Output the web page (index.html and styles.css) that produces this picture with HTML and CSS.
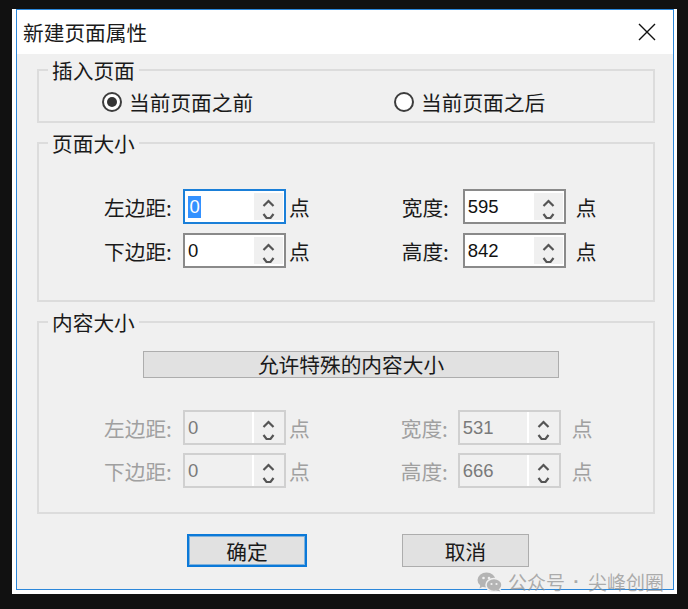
FILE: index.html
```html
<!DOCTYPE html>
<html lang="zh-CN">
<head>
<meta charset="utf-8">
<title>新建页面属性</title>
<link rel="stylesheet" href="styles.css">
</head>
<body>
<div class="screen">
  <div class="frame">
    <div class="dialog">
      <div class="titlebar">
        <span class="title">新建页面属性</span>
        <svg class="close" viewBox="0 0 18 18" width="18" height="18"><path d="M1 1 L17 17 M17 1 L1 17" stroke="#111" stroke-width="1.4" fill="none"/></svg>
      </div>
      <div class="body">
        <fieldset class="group g-insert">
          <legend>插入页面</legend>
          <div class="radios">
            <label class="radio"><span class="dot checked"></span>当前页面之前</label>
            <label class="radio"><span class="dot"></span>当前页面之后</label>
          </div>
        </fieldset>

        <fieldset class="group g-size">
          <legend>页面大小</legend>
          <div class="rows">
            <div class="row">
              <div class="field f-left">
                <span class="lbl">左边距:</span>
                <div class="spin focus"><span class="val"><span class="sel">0</span></span><span class="arrows"><svg viewBox="0 0 29 27" width="29" height="27"><path d="M9.5 13 L14.5 8 L19.5 13 M9.5 21 L12.5 25 L16.5 25 L19.5 21" stroke="#555" stroke-width="2.2" fill="none"/></svg></span></div>
                <span class="unit">点</span>
              </div>
              <div class="field f-right">
                <span class="lbl">宽度:</span>
                <div class="spin"><span class="val">595</span><span class="arrows"><svg viewBox="0 0 29 27" width="29" height="27"><path d="M9.5 13 L14.5 8 L19.5 13 M9.5 21 L12.5 25 L16.5 25 L19.5 21" stroke="#555" stroke-width="2.2" fill="none"/></svg></span></div>
                <span class="unit">点</span>
              </div>
            </div>
            <div class="row">
              <div class="field f-left">
                <span class="lbl">下边距:</span>
                <div class="spin"><span class="val">0</span><span class="arrows"><svg viewBox="0 0 29 27" width="29" height="27"><path d="M9.5 13 L14.5 8 L19.5 13 M9.5 21 L12.5 25 L16.5 25 L19.5 21" stroke="#555" stroke-width="2.2" fill="none"/></svg></span></div>
                <span class="unit">点</span>
              </div>
              <div class="field f-right">
                <span class="lbl">高度:</span>
                <div class="spin"><span class="val">842</span><span class="arrows"><svg viewBox="0 0 29 27" width="29" height="27"><path d="M9.5 13 L14.5 8 L19.5 13 M9.5 21 L12.5 25 L16.5 25 L19.5 21" stroke="#555" stroke-width="2.2" fill="none"/></svg></span></div>
                <span class="unit">点</span>
              </div>
            </div>
          </div>
        </fieldset>

        <fieldset class="group g-content">
          <legend>内容大小</legend>
          <button class="wide-btn" type="button">允许特殊的内容大小</button>
          <div class="rows">
            <div class="row">
              <div class="field f-left disabled">
                <span class="lbl">左边距:</span>
                <div class="spin"><span class="val">0</span><span class="arrows"><svg viewBox="0 0 29 27" width="29" height="27"><path d="M9.5 13 L14.5 8 L19.5 13 M9.5 21 L12.5 25 L16.5 25 L19.5 21" stroke="#555" stroke-width="2.2" fill="none"/></svg></span></div>
                <span class="unit">点</span>
              </div>
              <div class="field f-right disabled">
                <span class="lbl">宽度:</span>
                <div class="spin"><span class="val">531</span><span class="arrows"><svg viewBox="0 0 29 27" width="29" height="27"><path d="M9.5 13 L14.5 8 L19.5 13 M9.5 21 L12.5 25 L16.5 25 L19.5 21" stroke="#555" stroke-width="2.2" fill="none"/></svg></span></div>
                <span class="unit">点</span>
              </div>
            </div>
            <div class="row">
              <div class="field f-left disabled">
                <span class="lbl">下边距:</span>
                <div class="spin"><span class="val">0</span><span class="arrows"><svg viewBox="0 0 29 27" width="29" height="27"><path d="M9.5 13 L14.5 8 L19.5 13 M9.5 21 L12.5 25 L16.5 25 L19.5 21" stroke="#555" stroke-width="2.2" fill="none"/></svg></span></div>
                <span class="unit">点</span>
              </div>
              <div class="field f-right disabled">
                <span class="lbl">高度:</span>
                <div class="spin"><span class="val">666</span><span class="arrows"><svg viewBox="0 0 29 27" width="29" height="27"><path d="M9.5 13 L14.5 8 L19.5 13 M9.5 21 L12.5 25 L16.5 25 L19.5 21" stroke="#555" stroke-width="2.2" fill="none"/></svg></span></div>
                <span class="unit">点</span>
              </div>
            </div>
          </div>
        </fieldset>

        <div class="actions">
          <button class="btn primary" type="button">确定</button>
          <button class="btn cancel" type="button">取消</button>
        </div>
      </div>
    </div>
  </div>

  <div class="wm">
    <svg class="wm-icon" viewBox="0 0 25 20" width="25" height="20">
      <ellipse cx="9.5" cy="8" rx="9" ry="7.5" fill="#b4b4b4"/>
      <path d="M3.5 12.5 L2.5 16.5 L7 14" fill="#b4b4b4"/>
      <ellipse cx="17" cy="13" rx="8" ry="6.5" fill="#b4b4b4" stroke="#f0f0f0" stroke-width="1.5"/>
      <path d="M21.5 17 L23.5 19.5 L19 18.5" fill="#b4b4b4"/>
      <circle cx="6.5" cy="6" r="1.3" fill="#f0f0f0"/>
      <circle cx="12" cy="6" r="1.3" fill="#f0f0f0"/>
      <circle cx="14.5" cy="12" r="1.1" fill="#f0f0f0"/>
      <circle cx="19.5" cy="12" r="1.1" fill="#f0f0f0"/>
    </svg>
    <span class="wm-text">公众号</span><span class="wm-sep">·</span><span class="wm-text">尖峰创圈</span>
  </div>
</div>
</body>
</html>
```

FILE: styles.css
```css
html, body {
  margin: 0;
  padding: 0;
  background: #111;
}

body {
  width: 688px;
  height: 609px;
  overflow: hidden;
  font-family: "Noto Sans CJK SC", "Noto Sans", sans-serif;
  color: #1a1a1a;
}

.screen {
  position: relative;
  width: 688px;
  height: 609px;
  padding-top: 9px;
  box-sizing: border-box;
}

.frame {
  margin-left: 12px;
  width: 665px;
  background: #fff;
  padding: 0 3px 4px 4px;
  box-sizing: border-box;
}

.dialog {
  width: 658px;
  box-sizing: border-box;
  border: 1px solid #2b87da;
  background: #f0f0f0;
}

.titlebar {
  height: 44px;
  background: #fff;
  display: flex;
  align-items: center;
  justify-content: space-between;
  padding: 0 17px 0 6px;
}

.title {
  font-size: 20.7px;
  line-height: 24px;
  color: #1a1a1a;
}

.close {
  display: block;
}

.body {
  padding: 5px 18px 22px 20px;
}

.group {
  margin: 0;
  padding: 0;
  min-width: 0;
  border: 2px solid #dcdcdc;
}

.group + .group {
  margin-top: 9px;
}

.group legend {
  margin-left: 9px;
  padding: 0 4px;
  font-size: 20.7px;
  line-height: 22px;
}

.radios {
  display: grid;
  grid-template-columns: 292px auto;
  padding: 9px 0 7px 63px;
}

.radio {
  display: flex;
  align-items: center;
  gap: 7px;
  height: 24px;
  font-size: 20.7px;
  line-height: 24px;
}

.dot {
  width: 20px;
  height: 20px;
  box-sizing: border-box;
  border-radius: 50%;
  border: 2px solid #3d3d3d;
  background: #fff;
  display: grid;
  place-items: center;
}

.dot.checked::after {
  content: "";
  width: 10px;
  height: 10px;
  border-radius: 50%;
  background: #333;
}

.rows {
  display: flex;
  flex-direction: column;
  gap: 9px;
  padding: 35px 0 32px 65px;
}

.g-content .rows {
  gap: 8px;
  padding: 32px 0 24px 65px;
}

.row {
  display: flex;
  align-items: center;
  height: 35px;
}

.field {
  display: flex;
  align-items: center;
}

.lbl {
  font-size: 20.7px;
  line-height: 24px;
  white-space: nowrap;
}

.f-left .lbl {
  width: 79px;
}

.unit {
  margin-left: 3px;
  font-size: 20.7px;
  line-height: 24px;
}

.g-size .f-right {
  margin-left: 92px;
}

.g-size .f-right .lbl {
  width: 61px;
}

.g-size .f-right .unit {
  margin-left: 10px;
}

.g-content .f-right {
  margin-left: 91px;
}

.g-content .f-right .lbl {
  width: 57px;
}

.g-content .f-right .unit {
  margin-left: 11px;
}

.spin {
  width: 103px;
  height: 35px;
  box-sizing: border-box;
  border: 2px solid #8a8a8a;
  background: #fff;
  display: flex;
}

.spin.focus {
  border-color: #1a7fd8;
}

.val {
  flex: 1;
  display: flex;
  align-items: center;
  padding-left: 3px;
  font-family: "Liberation Sans", Arial, sans-serif;
  font-size: 18.5px;
  color: #111;
}

.sel {
  background: #3391ff;
  color: #fff;
  padding: 0 1.5px;
  line-height: 22px;
}

.arrows {
  width: 29px;
  margin: 2px 1px 2px 0;
  background: #f0f0f0;
  display: block;
}

.arrows svg {
  display: block;
}

.disabled .lbl,
.disabled .unit {
  color: #a0a0a0;
}

.disabled .spin {
  border-color: #d0d0d0;
  background: #f0f0f0;
}

.disabled .val {
  color: #7a7a7a;
}

.disabled .arrows {
  margin: 0;
  border-left: 2px solid #fff;
  width: 30px;
  display: flex;
  align-items: center;
}

.wide-btn {
  display: block;
  margin: 18px 0 0 104px;
  width: 416px;
  height: 27px;
  box-sizing: border-box;
  padding: 0;
  border: 1px solid #adadad;
  background: #e1e1e1;
  font-family: inherit;
  font-size: 20.7px;
  line-height: 25px;
  color: #1a1a1a;
  text-align: center;
}

.actions {
  display: flex;
  gap: 95px;
  margin-top: 20px;
  padding-left: 150px;
}

.btn {
  height: 33px;
  box-sizing: border-box;
  padding: 0;
  border: 1px solid #adadad;
  background: #e1e1e1;
  font-family: inherit;
  font-size: 20.7px;
  line-height: 28px;
  color: #1a1a1a;
}

.btn.primary {
  width: 120px;
  border: 2px solid #0b79d8;
  box-shadow: inset 0 0 0 1px rgba(11, 121, 216, 0.45);
}

.btn.cancel {
  width: 127px;
}

.wm {
  position: absolute;
  left: 477px;
  top: 571px;
  display: flex;
  align-items: center;
  font-size: 19px;
  line-height: 22px;
  color: rgba(140, 140, 140, 0.7);
}

.wm-icon {
  display: block;
  margin-right: 6px;
}

.wm-sep {
  width: 23px;
  font-family: "Liberation Sans", Arial, sans-serif;
  font-weight: bold;
  text-align: center;
}
```
